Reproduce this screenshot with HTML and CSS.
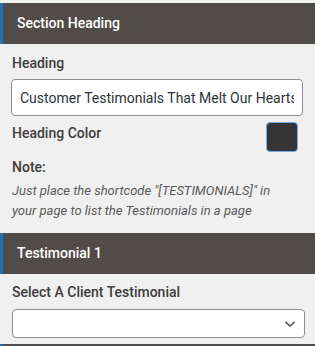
FILE: index.html
```html
<!DOCTYPE html>
<html lang="en">
<head>
  <meta charset="UTF-8" />
  <meta name="viewport" content="width=device-width, initial-scale=1.0"/>
  <title>Testimonials Settings</title>
  <link rel="stylesheet" href="styles.css">
</head>
<body>
  <div class="panel-head">Section Heading</div>
  <div class="panel-body">
    <label class="field-label" for="heading">Heading</label>
    <input class="text-input" id="heading" type="text" value="Customer Testimonials That Melt Our Hearts">

    <div class="color-row">
      <span class="field-label">Heading Color</span>
      <span class="swatch"></span>
    </div>

    <div class="note-title">Note:</div>
    <p class="note">Just place the shortcode "[TESTIMONIALS]" in your page to list the Testimonials in a page</p>
  </div>

  <div class="panel-head">Testimonial 1</div>
  <div class="panel-body">
    <label class="field-label select-label" for="client">Select A Client Testimonial</label>
    <div class="select-box" id="client">
      <svg class="chevron" width="12" height="8" viewBox="0 0 12 8">
        <path d="M1.5 1.8 L6 6 L10.5 1.8" fill="none" stroke="#50575e" stroke-width="1.6"/>
      </svg>
    </div>
  </div>

  <div class="panel-head last"></div>
</body>
</html>
```

FILE: styles.css
```css
* { margin: 0; padding: 0; box-sizing: border-box; }
body {
  font-family: Roboto, 'Liberation Sans', sans-serif;
  background: #f0f0f0;
  padding-top: 3px;
  width: 315px;
  height: 346px;
  overflow: hidden;
}

.panel-head {
  height: 41px;
  background: #514b49;
  border-left: 3px solid #2271b1;
  color: #fff;
  font-size: 14px;
  font-weight: 500;
  line-height: 41px;
  padding-left: 14px;
}
.panel-head.last {
  height: 3px;
  margin-top: 6px;
}

.panel-body {
  padding: 9px 11px 0 12px;
}

.field-label {
  display: block;
  color: #3c3c3c;
  font-size: 14px;
  font-weight: 500;
  line-height: 20px;
}

.text-input {
  display: block;
  width: 292px;
  height: 37px;
  margin-top: 6px;
  margin-left: -1px;
  padding: 0 8px;
  border: 1px solid #8c8f94;
  border-radius: 4px;
  background: #fff;
  font-family: Roboto, 'Liberation Sans', sans-serif;
  font-size: 14px;
  color: #2c3338;
  outline: none;
}

.color-row {
  display: flex;
  justify-content: space-between;
  align-items: flex-start;
  margin-top: 6px;
  height: 30px;
}
.color-row .field-label { margin-top: 1px; }

.swatch {
  width: 32px;
  height: 30px;
  margin-right: 6px;
  background: #353535;
  border: 1px solid #72aee6;
  border-radius: 4px;
}

.note-title {
  margin-top: 5px;
  color: #3c3c3c;
  font-size: 14px;
  font-weight: 500;
  line-height: 20px;
}

.note {
  max-width: 280px;
  margin-top: 4px;
  margin-bottom: 12px;
  color: #5a5a5a;
  font-size: 13px;
  font-style: italic;
  line-height: 20px;
}

.select-label { margin-top: -1px; }

.select-box {
  position: relative;
  width: 293px;
  height: 29px;
  margin-top: 7px;
  background: #fff;
  border: 1px solid #8c8f94;
  border-radius: 4px;
}
.chevron {
  position: absolute;
  right: 8px;
  top: 10px;
}
```
